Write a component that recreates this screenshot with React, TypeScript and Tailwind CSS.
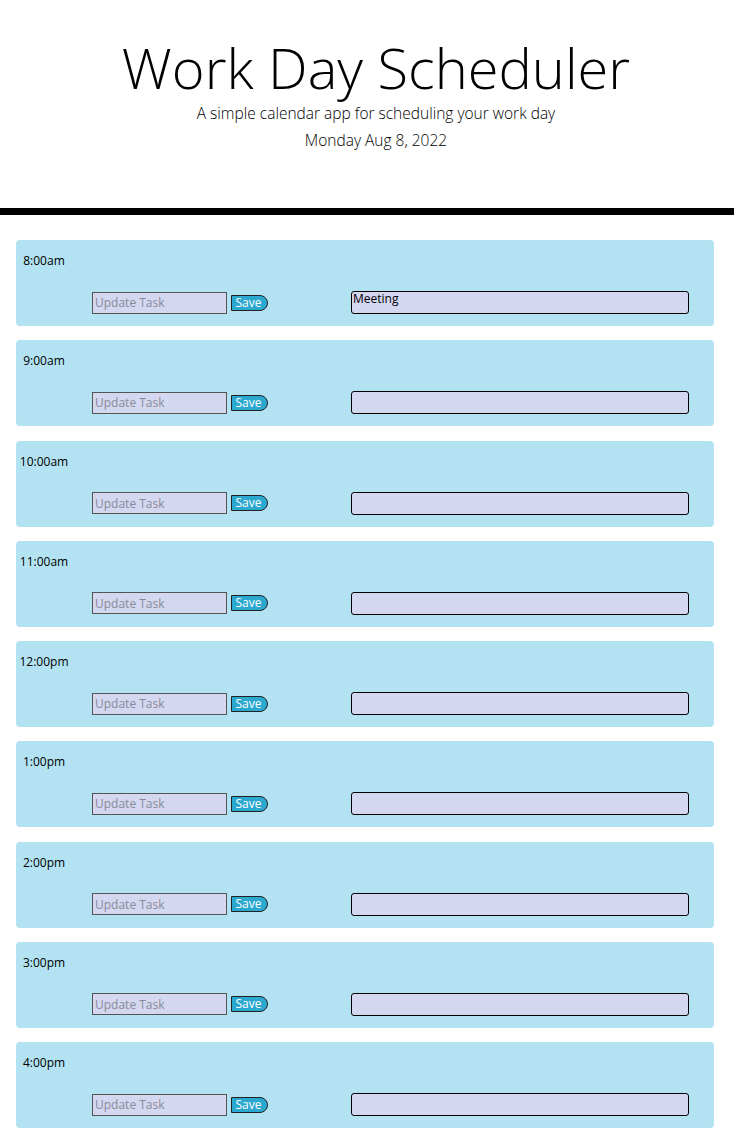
import React from "react";

const hours = ["8:00am", "9:00am", "10:00am", "11:00am", "12:00pm", "1:00pm", "2:00pm", "3:00pm", "4:00pm"];

function Row({ hour, task }: { hour: string; task: string }) {
  return (
    <div className="h-[86px] rounded-[4px] bg-[#b3e3f2] flex flex-col mb-[14.25px]">
      <div className="w-[56px] text-center mt-[13px] text-[12px] leading-[16px] text-black" style={{ fontFamily: '"Open Sans", sans-serif' }}>
        {hour}
      </div>
      <div className="flex items-center mt-auto mb-[12px]">
        <input
          className="ml-[76px] w-[135px] h-[22px] border border-[#555] bg-[#d3d7f0] px-[2px] text-[12px] outline-none placeholder:text-[#8a8a9a]"
          placeholder="Update Task"
        />
        <button className="ml-[4px] w-[37px] h-[16px] bg-[#2ba8cf] border border-[#222] rounded-r-full text-white text-[12px] leading-[14px] flex items-center justify-center pr-[2px]">
          Save
        </button>
        <div className="ml-[83px] w-[338px] h-[23px] border border-black rounded-[3px] bg-[#d3d7f0] text-[12px] leading-[14px] px-[1px] text-black">
          {task}
        </div>
      </div>
    </div>
  );
}

export default function App() {
  return (
    <div className="min-h-[1146px] bg-white" style={{ fontFamily: '"Open Sans", sans-serif' }}>
      <header className="flex flex-col items-center border-b-[7px] border-black h-[215px] pl-[18px]">
        <h1 className="mt-[39px] text-[56px] leading-[56px] font-light text-black">Work Day Scheduler</h1>
        <p className="mt-[7px] text-[15.5px] leading-[22px] font-light text-black">A simple calendar app for scheduling your work day</p>
        <p className="mt-[5px] text-[15.5px] leading-[22px] font-light text-black">Monday Aug 8, 2022</p>
      </header>
      <main className="px-[16px] pt-[25px] pr-[20px]">
        {hours.map((h, i) => (
          <Row key={h} hour={h} task={i === 0 ? "Meeting" : ""} />
        ))}
      </main>
    </div>
  );
}
